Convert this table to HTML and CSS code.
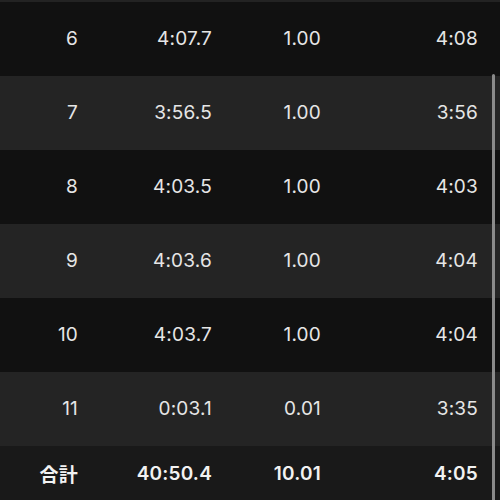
FILE: index.html
```html
<!DOCTYPE html>
<html lang="ja">
<head>
<meta charset="utf-8">
<link rel="stylesheet" href="styles.css">
</head>
<body>
<div class="screen">
  <div class="top-band"></div>
  <div class="laps">
    <div class="row dark"><span>6</span><span>4:07.7</span><span>1.00</span><span>4:08</span></div>
    <div class="row light"><span>7</span><span>3:56.5</span><span>1.00</span><span>3:56</span></div>
    <div class="row dark"><span>8</span><span>4:03.5</span><span>1.00</span><span>4:03</span></div>
    <div class="row light"><span>9</span><span>4:03.6</span><span>1.00</span><span>4:04</span></div>
    <div class="row dark"><span>10</span><span>4:03.7</span><span>1.00</span><span>4:04</span></div>
    <div class="row light"><span>11</span><span>0:03.1</span><span>0.01</span><span>3:35</span></div>
    <div class="row total"><span>合計</span><span>40:50.4</span><span>10.01</span><span>4:05</span></div>
  </div>
  <div class="scrollbar"></div>
</div>
</body>
</html>
```
FILE: styles.css
```css
html, body {
  margin: 0;
  padding: 0;
  background: #111111;
}
.screen {
  position: relative;
  width: 500px;
  height: 500px;
  overflow: hidden;
  font-family: "Inter", "Noto Sans CJK JP", sans-serif;
  color: #e6e6e6;
}
.top-band {
  height: 2px;
  background: #232323;
}
.laps {
  display: flex;
  flex-direction: column;
}
.row {
  display: grid;
  grid-template-columns: 78px 134px 109px 157px;
  height: 72px;
  padding-bottom: 2px;
  align-items: center;
  font-size: 19px;
  letter-spacing: 0.2px;
}
.row span {
  text-align: right;
}
.dark { background: #111111; }
.light { background: #242424; }
.total {
  background: #191919;
  height: 54px;
  padding-bottom: 0;
  font-weight: 600;
  color: #f2f2f2;
}
.scrollbar {
  position: absolute;
  left: 492px;
  top: 74px;
  width: 3px;
  height: 440px;
  background: #8a8a8a;
  border-radius: 2px;
}
```
